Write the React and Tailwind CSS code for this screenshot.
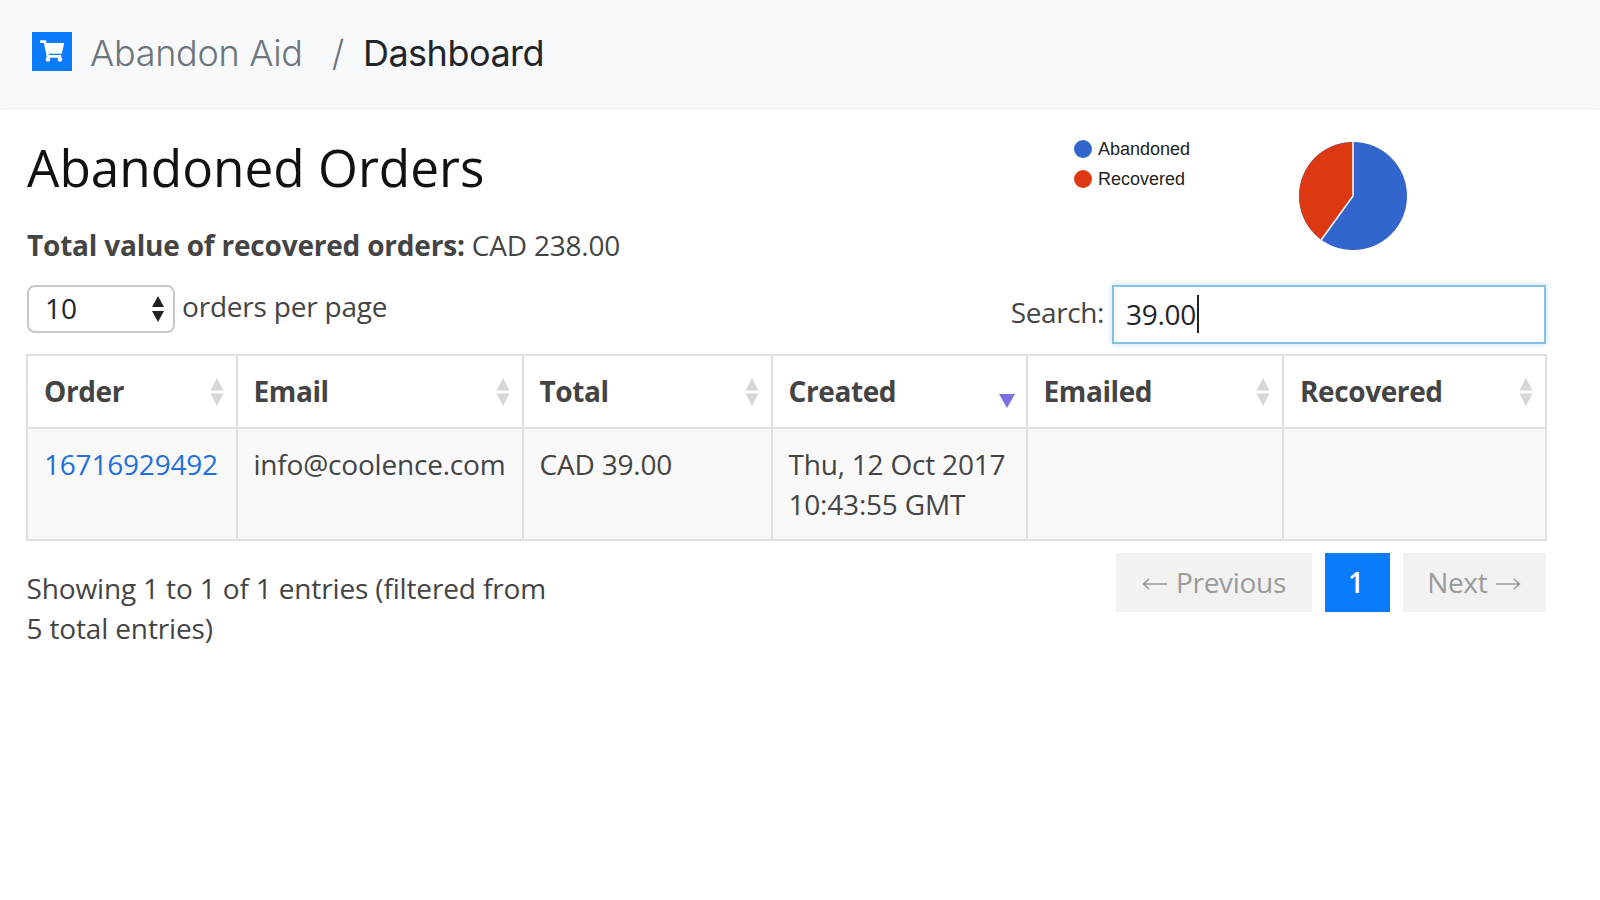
import React from "react";
import { FaShoppingCart } from "react-icons/fa";

const Sort = ({ active }) =>
  active ? (
    <svg width="16" height="34" viewBox="0 0 16 34" className="absolute right-[11px] top-[21px]">
      <path d="M0 17 L16 17 L8 31 Z" fill="#7a70e6" />
    </svg>
  ) : (
    <svg width="16" height="30" viewBox="0 0 16 30" className="absolute right-[11px] top-[21px]">
      <path d="M8 1 L14.5 13.5 L1.5 13.5 Z M1.5 16.5 L14.5 16.5 L8 29 Z" fill="#d6d6d6" />
    </svg>
  );

const Arrow = ({ left }) => (
  <svg width="26" height="14" viewBox="0 0 26 14" className={left ? "mr-[8px] mt-[5px]" : "ml-[8px] mt-[5px]"}>
    {left ? (
      <path d="M25 7 H2 M7 2 L1.5 7 L7 12" fill="none" stroke="#9a9a9a" strokeWidth="1.6" />
    ) : (
      <path d="M1 7 H24 M19 2 L24.5 7 L19 12" fill="none" stroke="#9a9a9a" strokeWidth="1.6" />
    )}
  </svg>
);

const cols = [
  { t: "Order", w: "w-[209.5px]" },
  { t: "Email", w: "w-[286px]" },
  { t: "Total", w: "w-[249px]" },
  { t: "Created", w: "w-[255px]", active: true },
  { t: "Emailed", w: "w-[256.5px]" },
  { t: "Recovered", w: "w-[263px]" },
];

export default function App() {
  return (
    <div className="min-h-[900px] bg-white font-['Open_Sans',sans-serif] text-[#444]">
      <header className="flex h-[108px] items-center bg-[#f8f9fa] pl-[32px] shadow-[0_1px_2px_rgba(0,0,0,0.08)] font-['Inter',sans-serif] text-[36px] font-light tracking-[-0.3px]">
        <span className="mb-[6px] flex h-[39px] w-[40px] items-center justify-center bg-[#0a7bfb] text-white">
          <FaShoppingCart size={24} />
        </span>
        <span className="mb-[2px] ml-[18px] text-[#6c757d]">Abandon Aid</span>
        <span className="mb-[2px] ml-[29px] text-[#6c757d]">/</span>
        <span className="mb-[2px] ml-[19px] font-normal tracking-[-0.5px] text-[#212529]">Dashboard</span>
      </header>

      <main className="pl-[27px] pr-[54px]">
        <div className="flex h-[177px] justify-between">
          <div>
            <h1 className="mt-[25px] text-[51.3px] leading-[68px] text-[#111]">Abandoned Orders</h1>
            <p className="mt-[24px] text-[28px] leading-[40px] tracking-[-0.2px]">
              <b>Total value of recovered orders:</b> CAD 238.00
            </p>
          </div>
          <div className="mr-[138px] mt-[33px] flex h-[110px] w-[334px] justify-between font-['Liberation_Sans',sans-serif] text-[18px] text-[#222]">
            <div className="-mt-[2px] flex flex-col gap-[10px]">
              <div className="flex h-[20px] items-center gap-[6px]">
                <span className="h-[18px] w-[18px] rounded-full bg-[#3366cc]" />
                Abandoned
              </div>
              <div className="flex h-[20px] items-center gap-[6px]">
                <span className="h-[18px] w-[18px] rounded-full bg-[#dc3912]" />
                Recovered
              </div>
            </div>
            <svg width="110" height="110" viewBox="-55 -55 110 110">
              <circle r="54" fill="#3366cc" />
              <path d="M0 0 L-31.7 43.7 A54 54 0 0 1 0 -54 Z" fill="#dc3912" />
              <path d="M-31.7 43.7 L0 0 L0 -54" fill="none" stroke="#fff" strokeWidth="1.5" />
            </svg>
          </div>
        </div>

        <div className="flex items-start justify-between">
          <div className="flex items-start">
            <div className="relative flex h-[48px] w-[148px] items-center rounded-[8px] border-2 border-[#c8c8c8] bg-white pb-[2px] pl-[16px] text-[28px] text-[#212529]">
              10
              <svg width="14" height="28" viewBox="0 0 14 28" className="absolute right-[8px] top-[8px]">
                <path d="M7 1 L13 12 L1 12 Z M1 16 L13 16 L7 27 Z" fill="#222" />
              </svg>
            </div>
            <span className="ml-[7px] mt-[1px] text-[28px] leading-[40px] tracking-[-0.2px]">orders per page</span>
          </div>
          <div className="flex items-center">
            <span className="-translate-y-[3px] text-[28px] leading-[40px] tracking-[-0.4px]">Search:</span>
            <div className="ml-[8px] flex h-[59px] w-[434px] items-center border-2 border-[#86c0e8] bg-white pb-[1px] pl-[12px] text-[28px] tracking-[-0.3px] text-[#212529] shadow-[0_0_6px_rgba(120,180,240,0.45)]">
              39.00
              <span className="ml-[1px] h-[38px] w-[2px] bg-[#222]" />
            </div>
          </div>
        </div>

        <table className="-ml-[1px] mt-[10px] w-[1519px] table-fixed border-collapse text-[28px] leading-[40px] tracking-[-0.2px]">
          <thead>
            <tr className="h-[73px]">
              {cols.map((c) => (
                <th key={c.t} className={`relative border-2 border-[#e0e0e0] pb-[2px] pl-[16px] text-left font-bold tracking-[-0.4px] ${c.w}`}>
                  {c.t}
                  <Sort active={c.active} />
                </th>
              ))}
            </tr>
          </thead>
          <tbody>
            <tr className="h-[112px] bg-[#f9f9f9] align-top">
              <td className="border-2 border-[#e0e0e0] pl-[16px] pt-[15px]">
                <a className="text-[#1f6fdc]">16716929492</a>
              </td>
              <td className="border-2 border-[#e0e0e0] pl-[16px] pt-[15px]">info@coolence.com</td>
              <td className="border-2 border-[#e0e0e0] pl-[16px] pt-[15px]">CAD 39.00</td>
              <td className="border-2 border-[#e0e0e0] pl-[16px] pt-[15px]">
                Thu, 12 Oct 2017
                <br />
                10:43:55 GMT
              </td>
              <td className="border-2 border-[#e0e0e0]" />
              <td className="border-2 border-[#e0e0e0]" />
            </tr>
          </tbody>
        </table>

        <div className="mt-[12px] flex items-start justify-between">
          <p className="-ml-[0.5px] mt-[15px] text-[28px] leading-[40px] tracking-[-0.15px]">
            Showing 1 to 1 of 1 entries (filtered from
            <br />5 total entries)
          </p>
          <div className="flex gap-[12.5px] text-[28px] tracking-[-0.3px]">
            <span className="flex h-[59px] w-[196px] items-center justify-center bg-[#f2f2f2] pb-[2px] text-[#9a9a9a]">
              <Arrow left />
              Previous
            </span>
            <span className="flex h-[59px] w-[65.5px] items-center justify-center bg-[#0a7bfb] pb-[2px] pr-[3px] font-semibold text-white">1</span>
            <span className="flex h-[59px] w-[143.5px] items-center justify-center bg-[#f2f2f2] pb-[2px] text-[#9a9a9a]">
              Next
              <Arrow />
            </span>
          </div>
        </div>
      </main>
    </div>
  );
}
